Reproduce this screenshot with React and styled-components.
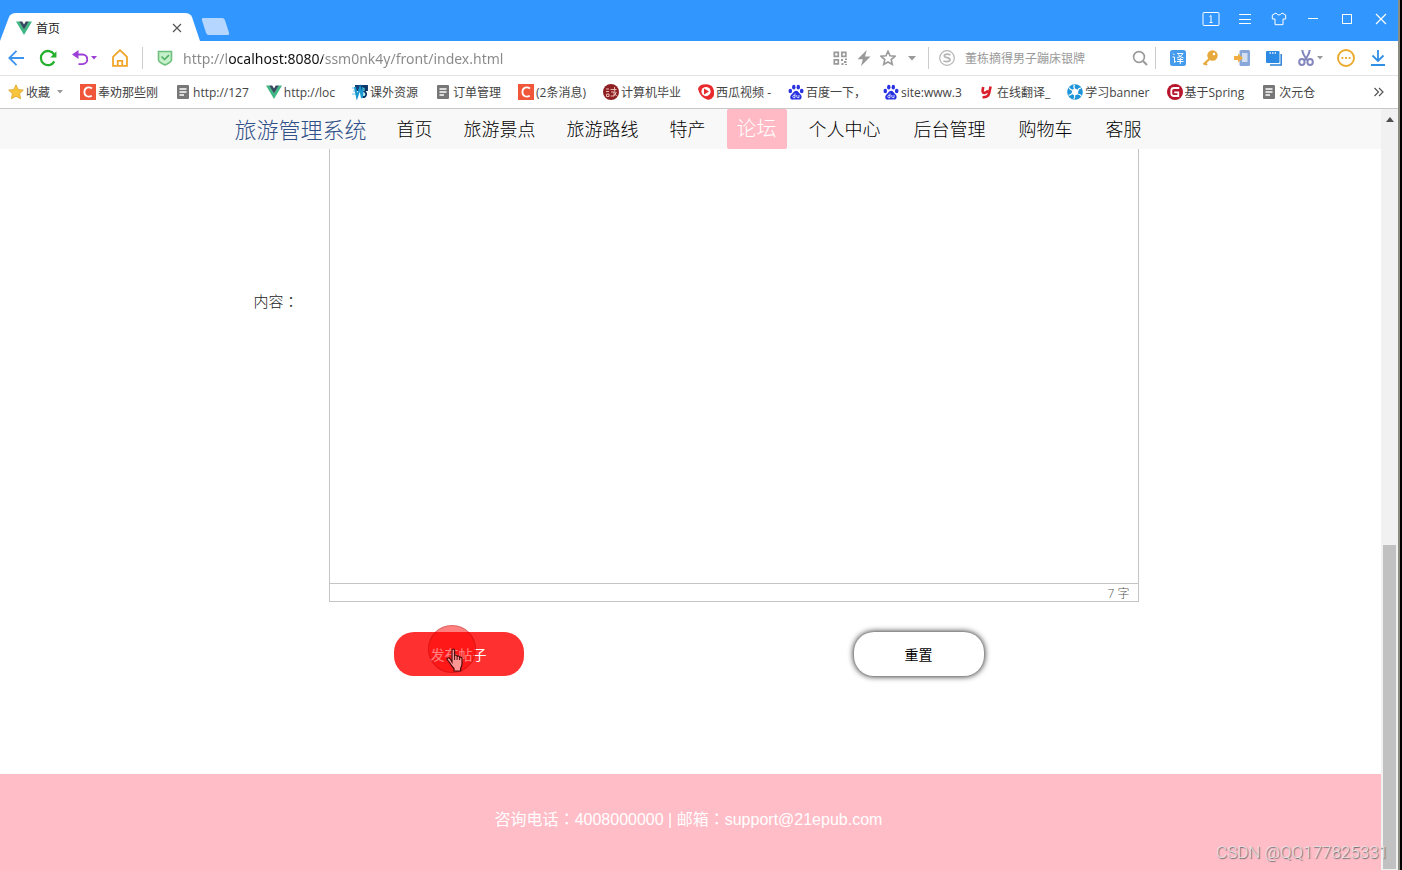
import React, { useState } from 'react'
import styled, { createGlobalStyle, css } from 'styled-components'

const GlobalStyle = createGlobalStyle`
  * {
    box-sizing: border-box;
  }
  body {
    margin: 0;
    background: #000;
    color: #222;
    font-family: 'Open Sans', 'Noto Sans CJK SC', sans-serif;
    font-size: 12px;
  }
  button, input, textarea {
    font-family: inherit;
  }
`

const Window = styled.div`
  display: flex;
  flex-direction: column;
  height: 100vh;
  margin-right: 2px;
  border-right: 2px solid #8a8d80;
  background: #fff;
  overflow: hidden;
`

// full-width punctuation sits in the middle of its box in this family
const Punct = styled.span`
  font-family: 'Noto Sans CJK TC', sans-serif;
  line-height: 1;
`

const IconButton = styled.button`
  flex: none;
  display: flex;
  align-items: center;
  justify-content: center;
  width: ${({ $narrow }) => ($narrow ? '8px' : '20px')};
  height: 20px;
  padding: 0;
  border: 0;
  background: none;
  color: ${({ $color }) => $color || '#999'};
  & svg {
    flex: none;
    display: block;
  }
`

const TitleBar = styled.header`
  flex: none;
  display: flex;
  align-items: flex-end;
  height: 41px;
  background: #3296ff;
`

const Tab = styled.div`
  display: flex;
  align-items: center;
  gap: 4px;
  width: 200px;
  height: 28px;
  padding: 2px 13px 0 16px;
  background: #fff;
  color: #222;
  clip-path: path('M0 28 L9 4 Q11 0 16 0 H185 Q190 0 192 4 L200 28 Z');
`

const TabTitle = styled.span`
  flex: 1;
`

const NewTab = styled.button`
  width: 23px;
  height: 17px;
  margin: 0 0 6px 4px;
  padding: 0;
  border: 0;
  border-radius: 2px;
  background: #b5d7ff;
  transform: skewX(18deg);
`

const WindowControls = styled.div`
  align-self: flex-start;
  display: flex;
  gap: 14px;
  margin-left: auto;
  padding: 9px 7px 0 0;
`

const AddressBar = styled.div`
  flex: none;
  display: flex;
  align-items: center;
  height: 35px;
  border-bottom: 1px solid #e4e4e8;
`

const Tools = styled.div`
  display: flex;
  align-items: center;
  gap: ${({ $tight }) => ($tight ? '4px' : '12px')};
  padding: ${({ $pad }) => $pad || '0'};
`

const Split = styled.div`
  display: flex;
`

const Divider = styled.span`
  width: 1px;
  height: 22px;
  background: #ccc;
`

const fieldReset = css`
  flex: 1;
  min-width: 0;
  padding: 0;
  border: 0;
  outline: 0;
  background: none;
`

const UrlInput = styled.input`
  ${fieldReset}
  height: 24px;
  margin-left: 8px;
  font-family: 'Noto Sans', sans-serif;
  font-size: 14px;
  background-image: linear-gradient(90deg, #888 44px, #111 44px, #111 140px, #888 140px);
  background-clip: text;
  -webkit-text-fill-color: transparent;
`

const SearchForm = styled.form`
  display: flex;
  align-items: center;
  gap: 8px;
  width: 226px;
  padding: 0 5px 0 8px;
`

const SearchInput = styled.input`
  ${fieldReset}
  font-size: 12px;
  &::placeholder {
    color: #999;
    opacity: 1;
  }
`

const BookmarkBar = styled.nav`
  flex: none;
  display: flex;
  align-items: center;
  gap: 17px;
  height: 33px;
  padding: 0 9px 0 8px;
  border-bottom: 1px solid #c8c8c8;
`

const Bookmark = styled.a`
  display: flex;
  align-items: center;
  gap: 2px;
  color: #444;
  text-decoration: none;
  white-space: nowrap;
  & svg {
    flex: none;
  }
`

const BookmarkCaret = styled.span`
  display: flex;
  padding-left: 5px;
  color: #999;
`

const MoreBookmarks = styled.div`
  margin-left: auto;
`

const Viewport = styled.div`
  flex: 1;
  display: flex;
  min-height: 0;
  overflow: hidden;
`

const Page = styled.div`
  flex: 1;
  display: flex;
  flex-direction: column;
  min-width: 0;
`

const SiteNav = styled.nav`
  position: relative;
  z-index: 1;
  flex: none;
  padding-right: 4px;
  background: #f8f8f8;
`

const NavInner = styled.div`
  display: flex;
  align-items: center;
  max-width: 920px;
  height: 40px;
  margin: 0 auto;
  padding-left: 6px;
  white-space: nowrap;
`

const Brand = styled.a`
  margin-right: 20px;
  color: #2f5088;
  font-size: 22px;
  font-weight: 300;
  line-height: 40px;
  text-decoration: none;
`

const NavList = styled.ul`
  display: flex;
  gap: ${({ $gap }) => $gap};
  margin: 0 12px 0 0;
  padding: 0;
  list-style: none;
`

const NavLink = styled.a`
  display: block;
  padding: 0 10px;
  border-radius: 2px;
  background: ${({ $active }) => ($active ? '#ffbac5' : 'none')};
  color: ${({ $active }) => ($active ? '#fff' : '#000')};
  font-size: ${({ $active }) => ($active ? '20px' : '18px')};
  font-weight: 300;
  line-height: 40px;
  text-decoration: none;
`

const Main = styled.main`
  flex: 1;
  display: flex;
  flex-direction: column;
  justify-content: flex-end;
  min-height: 0;
  padding-right: 4px;
`

const PostForm = styled.form`
  width: 100%;
  max-width: 920px;
  margin: 0 auto;
  padding-bottom: 98px;
`

const Field = styled.div`
  display: flex;
  align-items: center;
  padding-right: 10px;
`

const FieldLabel = styled.label`
  width: 100px;
  padding-right: 30px;
  color: #222;
  font-size: 15px;
  font-weight: 300;
  line-height: 20px;
  text-align: right;
  white-space: nowrap;
`

const Editor = styled.div`
  flex: 1;
  display: flex;
  flex-direction: column;
  height: 602px;
  border: 1px solid #c4c4c4;
`

const EditorArea = styled.textarea`
  flex: 1;
  padding: 12px;
  border: 0;
  outline: 0;
  background: #fff;
  font-size: 14px;
  resize: none;
`

const WordCount = styled.div`
  padding: 2px 8px 0 0;
  border-top: 1px solid #c4c4c4;
  color: #555;
  font-size: 12px;
  font-weight: 300;
  line-height: 15px;
  text-align: right;
`

const Actions = styled.div`
  display: grid;
  grid-template-columns: 1fr 1fr;
  justify-items: center;
  margin-top: 30px;
`

const ActionSlot = styled.div`
  position: relative;
`

const ActionButton = styled.button`
  width: 130px;
  height: 44px;
  padding: 0;
  border: 0;
  border-radius: 20px;
  background: ${({ $primary }) => ($primary ? '#ff3030' : '#fff')};
  box-shadow: ${({ $primary }) => ($primary ? 'none' : '0 0 6px #000')};
  color: ${({ $primary }) => ($primary ? '#fff' : '#000')};
  font-size: 14px;
`

const Pointer = styled.div`
  position: absolute;
  top: -7px;
  left: 34px;
  width: 48px;
  height: 48px;
  border-radius: 50%;
  background: rgba(255, 0, 0, 0.5);
  box-shadow: inset 0 0 0 1px rgba(90, 0, 0, 0.2);
  pointer-events: none;
  & svg {
    position: absolute;
    top: 23px;
    left: 18px;
  }
`

const Footer = styled.footer`
  flex: none;
  height: 96px;
  padding: 34px 4px 0 0;
  background: #ffbdc7;
  color: #fff;
  font-family: 'Liberation Sans', 'Noto Sans CJK SC', sans-serif;
  font-size: 16px;
  line-height: 24px;
  text-align: center;
`

const Watermark = styled.div`
  position: absolute;
  right: 14px;
  bottom: 6px;
  color: #e4e0e2;
  font-family: Roboto, sans-serif;
  font-size: 17px;
  font-weight: 300;
  line-height: 24px;
  text-shadow: 1px 1px 1px #666;
`

const Scrollbar = styled.div`
  flex: none;
  display: flex;
  flex-direction: column;
  justify-content: space-between;
  align-items: center;
  width: 17px;
  background: #f1f1f1;
`

const ScrollThumb = styled.div`
  width: 13px;
  height: 324px;
  margin-bottom: 1px;
  background: #c1c1c1;
`

const Svg = ({ size = 16, children, ...rest }) => (
  <svg width={size} height={size} viewBox="0 0 16 16" fill="none" aria-hidden="true" {...rest}>
    {children}
  </svg>
)

const Caret = () => (
  <svg width="6" height="4" viewBox="0 0 6 4" aria-hidden="true">
    <path d="M0 0h6L3 3.5z" fill="currentColor" />
  </svg>
)

const VueIcon = () => (
  <Svg>
    <path d="M0 1.5h3.4L8 9.3l4.6-7.8H16L8 15z" fill="#41b883" />
    <path d="M3.2 1.5h3L8 4.6l1.8-3.1h3L8 9.6z" fill="#34495e" />
  </Svg>
)

const FavIcon = () => (
  <Svg>
    <path d="M8 .8l2.2 4.7 5.2.6-3.8 3.6 1 5.1L8 12.3l-4.6 2.5 1-5.1L.6 6.1l5.2-.6z" fill="#f7c43b" stroke="#dca52e" strokeWidth=".8" />
  </Svg>
)

const CsdnIcon = () => (
  <Svg>
    <path d="M0 0h16v16H0z" fill="#f0563a" />
    <path d="M12 4.4C9 2.4 4.6 3.3 4.4 8c0 4.6 4.3 5.6 7.4 3.7" stroke="#fff" strokeWidth="1.8" />
  </Svg>
)

const DocIcon = () => (
  <Svg>
    <rect x="2" y="1" width="12" height="14" rx="1" fill="#777" />
    <path d="M4.5 5h7M4.5 8h7M4.5 11h4.5" stroke="#fff" strokeWidth="1.3" />
  </Svg>
)

const WbIcon = () => (
  <Svg>
    <path d="M3 1h13v6H3z" fill="#123f73" />
    <path d="M0 4h3M1 7h3M0 10h4" stroke="#6cc3ee" />
    <path d="M3 3l2 10 3-9 2 10 1-11" stroke="#1898cf" strokeWidth="2" />
    <path d="M11 2.5h2.5q2 2.5-1 5 3.5 2.5 0 5.5H11" stroke="#0b3566" strokeWidth="1.8" />
    <path d="M12 4v3M12 9v3" stroke="#7ce0d4" />
  </Svg>
)

const SealIcon = () => (
  <Svg>
    <circle cx="8" cy="8" r="8" fill="#8e1f22" />
    <path d="M3 5h3M3 7.5h3M3.5 10h2.5v2.5h-2.5zM7.5 5.5h6M8 8h3v4M7.5 12h3M11.5 3c0 4 .5 7 2 9M13.5 8l-3 4.5" stroke="#f0c9c4" strokeWidth=".9" />
  </Svg>
)

const XiguaIcon = () => (
  <Svg>
    <path d="M0 5Q1 1 5 .5 13-.5 15 4q2 4 .5 8.500Q13 16.500 9 15.500 2 13 0 5z" fill="#e92a2d" />
    <circle cx="8" cy="7.600" r="4.600" fill="#fff" />
    <path d="M6 4.600l5 3-5 3z" fill="#e92a2d" />
  </Svg>
)

const BaiduIcon = () => (
  <Svg>
    <g fill="#2932e1">
      <ellipse cx="2.3" cy="7" rx="1.8" ry="2.3" />
      <ellipse cx="5.8" cy="3.2" rx="1.7" ry="2.4" />
      <ellipse cx="10.3" cy="3.2" rx="1.7" ry="2.4" />
      <ellipse cx="13.7" cy="7" rx="1.8" ry="2.3" />
      <path d="M8 6.8c2.2 0 2.8 2.2 4.4 3.5 2.1 1.7 1.5 5.4-1.6 5.3-1.9 0-3.7-.4-5.6 0-3 .5-4-3-1.8-5C5 9.3 5.8 6.8 8 6.8z" />
    </g>
    <path d="M7 9.5v4.2H5.4q-1.2-1.3 0-2.4H7M8.8 11v2q0 .8 2.2.7V11" stroke="#fff" strokeWidth=".8" />
  </Svg>
)

const YoudaoIcon = () => (
  <Svg>
    <path d="M4.2 3l-.6 3.5q-.3 2.5 2 2.4 2.2-.2 3.6-2.4M11.6 2.5L10.2 9q-1 4.5-6.7 4.3" stroke="#d9202a" strokeWidth="2.6" />
  </Svg>
)

const ApertureIcon = () => (
  <Svg>
    <circle cx="8" cy="8" r="7.8" fill="#1d95d8" />
    <circle cx="8" cy="8" r="3.2" fill="#fff" />
    <path d="M8 5Q6 3 7.5.8M10.8 7Q11.5 4 14 4.2M10.5 10q3 .2 3.8 2.3M7.5 11q1 2.5-.8 4.2M5.2 9Q4 11.5 1.5 11M5.5 6Q3 6 2.3 3.6" stroke="#fff" strokeWidth="1.2" />
  </Svg>
)

const GIcon = () => (
  <Svg>
    <circle cx="8" cy="8" r="8" fill="#b8142b" />
    <path d="M12.2 4H7Q4.3 4 4.3 6.5v3Q4.3 12 7 12h4.3V8.3H7.2" stroke="#fff" strokeWidth="1.8" />
  </Svg>
)

const bookmarks = [
  { icon: CsdnIcon, label: '奉劝那些刚' },
  { icon: DocIcon, label: 'http://127' },
  { icon: VueIcon, label: 'http://loc' },
  { icon: WbIcon, label: '课外资源' },
  { icon: DocIcon, label: '订单管理' },
  { icon: CsdnIcon, label: '(2条消息)' },
  { icon: SealIcon, label: '计算机毕业' },
  { icon: XiguaIcon, label: '西瓜视频 -' },
  { icon: BaiduIcon, label: '百度一下，' },
  { icon: BaiduIcon, label: 'site:www.3' },
  { icon: YoudaoIcon, label: '在线翻译_' },
  { icon: ApertureIcon, label: '学习banner' },
  { icon: GIcon, label: '基于Spring' },
  { icon: DocIcon, label: '次元仓' },
]

const siteLinks = ['首页', '旅游景点', '旅游路线', '特产', '论坛']
const userLinks = ['个人中心', '后台管理', '购物车', '客服']

const TopBar = () => (
  <TitleBar>
    <Tab>
      <VueIcon />
      <TabTitle>首页</TabTitle>
      <IconButton $color="#555" aria-label="关闭标签">
        <Svg>
          <path d="M4 4l8 8M12 4l-8 8" stroke="currentColor" strokeWidth="1.2" />
        </Svg>
      </IconButton>
    </Tab>
    <NewTab aria-label="新标签" />
    <WindowControls>
      <IconButton $color="#fff" aria-label="窗口">
        <svg width="18" height="14" viewBox="0 0 18 14" fill="none" stroke="currentColor">
          <rect x="1" y=".5" width="16" height="13" rx="1" />
          <path d="M7.5 4.5l1.5-1v7M7.5 10.5h3" />
        </svg>
      </IconButton>
      <IconButton $color="#fff" aria-label="菜单">
        <Svg stroke="currentColor">
          <path d="M2 3.5h12M2 8.5h12M2 12.5h12" />
        </Svg>
      </IconButton>
      <IconButton $color="#fff" aria-label="皮肤">
        <Svg stroke="currentColor">
          <path d="M5 2L1.3 4v4h2.7v5.7h8V8h2.7V4L11 2Q9.8 4 8 4T5 2z" />
        </Svg>
      </IconButton>
      <IconButton $color="#fff" aria-label="最小化">
        <Svg stroke="currentColor">
          <path d="M3 7.5h10" />
        </Svg>
      </IconButton>
      <IconButton $color="#fff" aria-label="最大化">
        <Svg stroke="currentColor">
          <rect x="3.5" y="3.5" width="9" height="9" />
        </Svg>
      </IconButton>
      <IconButton $color="#fff" aria-label="关闭">
        <Svg stroke="currentColor" strokeWidth="1.2">
          <path d="M3 3l10 10M13 3L3 13" />
        </Svg>
      </IconButton>
    </WindowControls>
  </TitleBar>
)

const Address = () => {
  const [url, setUrl] = useState('http://localhost:8080/ssm0nk4y/front/index.html')
  return (
    <AddressBar>
      <Tools $pad="0 0 0 6px">
        <IconButton $color="#3b94ee" aria-label="后退">
          <Svg stroke="currentColor" strokeWidth="1.8">
            <path d="M16 8H1.5M8.5 .8L1.3 8l7.2 7.2" />
          </Svg>
        </IconButton>
        <IconButton $color="#23b02c" aria-label="刷新">
          <Svg size={18} stroke="currentColor" strokeWidth="2">
            <path d="M13.6 11A6.3 6.3 0 1 1 13.5 5" />
            <path d="M15.5 2v5.5H10z" fill="currentColor" stroke="none" />
          </Svg>
        </IconButton>
        <Split>
          <IconButton $color="#9c3fd6" aria-label="撤销">
            <Svg stroke="currentColor" strokeWidth="1.9">
              <path d="M2 4.5h8.5a4.8 4.8 0 0 1 0 9.6H6.5" />
              <path d="M6.5 0v9L0 4.5z" fill="currentColor" stroke="none" />
            </Svg>
          </IconButton>
          <IconButton $narrow $color="#9c3fd6" aria-label="撤销列表">
            <Caret />
          </IconButton>
        </Split>
        <IconButton $color="#f2a52a" aria-label="主页">
          <Svg size={18} stroke="currentColor" strokeWidth="1.6">
            <path d="M1.8 7L8 1l6.2 6v8H1.8zM6 15v-4.500h4V15" />
          </Svg>
        </IconButton>
        <Divider />
        <IconButton $color="#6fc07e" aria-label="安全">
          <Svg>
            <path d="M1.5 1.5h13V10q0 2-6.5 5-6.5-3-6.5-5z" fill="#c5f0ca" stroke="currentColor" strokeWidth="1.6" />
            <path d="M4.5 6.5L7.5 9.5 12 5.2" stroke="#4fb063" strokeWidth="1.6" />
          </Svg>
        </IconButton>
      </Tools>
      <UrlInput aria-label="地址" spellCheck="false" value={url} onChange={e => setUrl(e.target.value)} />
      <Tools $tight $pad="0 6px 0 0">
        <IconButton aria-label="二维码">
          <Svg stroke="currentColor" strokeWidth="1.7">
            <path d="M2.3 2.3h4v4h-4zM9.8 2.3h4v4h-4zM2.3 9.8h4v4h-4z" />
            <path d="M9 9h2v2H9zM12 11h2.5v2H12zM9.5 13h2v2h-2zM13 8.5h2v1.5h-2zM13 14h2v1h-2z" fill="currentColor" stroke="none" />
          </Svg>
        </IconButton>
        <IconButton aria-label="极速模式">
          <Svg>
            <path d="M10.8 0L1.5 9.3h5.3L5 16l9.5-9.5H9z" fill="currentColor" />
          </Svg>
        </IconButton>
        <IconButton aria-label="收藏此页">
          <Svg stroke="currentColor" strokeWidth="1.6">
            <path d="M8 1.3l2 4.5 4.9.5-3.7 3.3 1.1 4.8L8 12l-4.3 2.4 1.1-4.8L1.1 6.3 6 5.8z" />
          </Svg>
        </IconButton>
        <IconButton aria-label="更多">
          <svg width="8" height="5" viewBox="0 0 8 5">
            <path d="M0 0h8L4 4.5z" fill="currentColor" />
          </svg>
        </IconButton>
      </Tools>
      <Divider />
      <SearchForm onSubmit={e => e.preventDefault()}>
        <IconButton type="button" $color="#b5b5b5" aria-label="搜狗">
          <Svg stroke="currentColor">
            <circle cx="8" cy="8" r="7.3" strokeWidth="1.2" />
            <path d="M11.5 5Q8 3.3 5.5 5q-1 2 2.5 2.7Q12 8.5 10.7 10.7 8 12.5 4.5 11" strokeWidth="1.7" />
          </Svg>
        </IconButton>
        <SearchInput aria-label="搜索" placeholder="董栋摘得男子蹦床银牌" />
        <IconButton aria-label="开始搜索">
          <Svg stroke="currentColor" strokeWidth="1.6">
            <circle cx="7" cy="7" r="5.4" />
            <path d="M11 11l4 4" strokeWidth="1.9" />
          </Svg>
        </IconButton>
      </SearchForm>
      <Divider />
      <Tools $pad="0 10px 0 12px">
        <IconButton aria-label="翻译">
          <Svg>
            <rect width="16" height="16" rx="2.5" fill="#459bec" />
            <path d="M3 3.5l1.5 1.5M2.5 7h2v5.5l1.5-1.3M7 3.5h6Q11.5 6.5 7 8M8 4.5q2 2.5 5.5 3.5M7.5 9.5h5.5M7 11.5h6.5M10.3 8v6" stroke="#fff" />
          </Svg>
        </IconButton>
        <IconButton $color="#e8a93c" aria-label="密码">
          <Svg>
            <path d="M8 8.5L1.5 14.5M2.5 12.5l2.5 2.5" stroke="currentColor" strokeWidth="2.2" />
            <circle cx="10.5" cy="5.5" r="5.2" fill="currentColor" />
            <circle cx="12" cy="4" r="1.3" fill="#fff" />
          </Svg>
        </IconButton>
        <IconButton aria-label="手机">
          <Svg>
            <rect x="5.5" y="0" width="10.5" height="16" rx="1.5" fill="#87a8d8" />
            <path d="M8 3h5.5v9H8z" fill="#d4e0f2" />
            <path d="M0 6h4V3.5L9 8l-5 4.5V10H0z" fill="#f0ae42" />
          </Svg>
        </IconButton>
        <IconButton aria-label="视频">
          <Svg>
            <path d="M4 15h11.2V4" stroke="#2b80d4" strokeWidth="1.5" />
            <rect x="0" y="1" width="13.5" height="12" rx="1" fill="#2d8ae4" />
            <path d="M3.5 3h7.5" stroke="#fff" strokeWidth="1.3" strokeDasharray="1.3 1.3" />
          </Svg>
        </IconButton>
        <Split>
          <IconButton $color="#8386bd" aria-label="截图">
            <Svg stroke="currentColor" strokeWidth="2">
              <path d="M4.3 0Q4.8 5 9.8 10.5M11.7 0Q11.2 5 6.2 10.5" />
              <ellipse cx="3.9" cy="12" rx="2.7" ry="3" />
              <ellipse cx="12.1" cy="12" rx="2.7" ry="3" />
            </Svg>
          </IconButton>
          <IconButton $narrow aria-label="截图选项">
            <Caret />
          </IconButton>
        </Split>
        <IconButton $color="#eda92c" aria-label="扩展">
          <Svg size={18}>
            <circle cx="8" cy="8" r="7.1" stroke="currentColor" strokeWidth="1.7" />
            <path d="M4 7.2h1.6v1.6H4zM7.2 7.2h1.6v1.6H7.2zM10.4 7.2H12v1.6h-1.6z" fill="currentColor" />
          </Svg>
        </IconButton>
        <IconButton $color="#2f8fe4" aria-label="下载">
          <Svg stroke="currentColor" strokeWidth="1.8">
            <path d="M8 0v11M2.5 5.5L8 11l5.5-5.5M1 15h14" />
          </Svg>
        </IconButton>
      </Tools>
    </AddressBar>
  )
}

const Bookmarks = () => (
  <BookmarkBar>
    <Bookmark href="#fav">
      <FavIcon />
      收藏
      <BookmarkCaret>
        <Caret />
      </BookmarkCaret>
    </Bookmark>
    {bookmarks.map(({ icon: Icon, label }) => (
      <Bookmark href="#bookmark" key={label}>
        <Icon />
        {label}
      </Bookmark>
    ))}
    <MoreBookmarks>
      <IconButton $color="#555" aria-label="更多书签">
        <Svg stroke="currentColor" strokeWidth="1.2">
          <path d="M3.5 4l4 4-4 4M8 4l4 4-4 4" />
        </Svg>
      </IconButton>
    </MoreBookmarks>
  </BookmarkBar>
)

const Links = ({ items, gap, active }) => (
  <NavList $gap={gap}>
    {items.map(item => (
      <li key={item}>
        <NavLink href="#nav" $active={item === active}>
          {item}
        </NavLink>
      </li>
    ))}
  </NavList>
)

const App = () => {
  return (
    <>
      <GlobalStyle />
      <Window>
        <TopBar />
        <Address />
        <Bookmarks />
        <Viewport>
          <Page>
            <SiteNav>
              <NavInner>
                <Brand href="#home">旅游管理系统</Brand>
                <Links items={siteLinks} gap="11px" active="论坛" />
                <Links items={userLinks} gap="13px" />
              </NavInner>
            </SiteNav>
            <Main>
              <PostForm onSubmit={e => e.preventDefault()}>
                <Field>
                  <FieldLabel htmlFor="content">
                    内容<Punct>：</Punct>
                  </FieldLabel>
                  <Editor>
                    <EditorArea id="content" />
                    <WordCount>7 字</WordCount>
                  </Editor>
                </Field>
                <Actions>
                  <ActionSlot>
                    <ActionButton $primary>发布帖子</ActionButton>
                    <Pointer>
                      <svg width="18" height="24" viewBox="0 0 18 24" aria-hidden="true">
                        <path
                          d="M6 14V2.500q0-1.500 1.300-1.500t1.300 1.500V8q0-1 1.200-1t1.300 1.200V9q.2-1 1.300-1t1.200 1.200v.8q.2-.9 1.200-.9t1.200 1.300V16q0 2-1.300 4v3H8v-2.500Q5.500 18 3.500 14.500L1.500 12q-1-1.500.3-2t2.500 1z"
                          fill="#ff9696"
                          stroke="#4a0a0a"
                          strokeWidth="1.2"
                        />
                        <path d="M8.600 8v4M11.100 9v3M13.600 10v2" stroke="#4a0a0a" />
                      </svg>
                    </Pointer>
                  </ActionSlot>
                  <ActionButton type="reset">重置</ActionButton>
                </Actions>
              </PostForm>
            </Main>
            <Footer>
              咨询电话<Punct>：</Punct>4008000000 | 邮箱<Punct>：</Punct>support@21epub.com
            </Footer>
          </Page>
          <Scrollbar>
            <IconButton $color="#505050" aria-label="向上滚动">
              <svg width="8" height="5" viewBox="0 0 8 5">
                <path d="M0 5h8L4 0z" fill="currentColor" />
              </svg>
            </IconButton>
            <ScrollThumb />
          </Scrollbar>
        </Viewport>
      </Window>
      <Watermark>CSDN @QQ177825331</Watermark>
    </>
  )
}

export default App
